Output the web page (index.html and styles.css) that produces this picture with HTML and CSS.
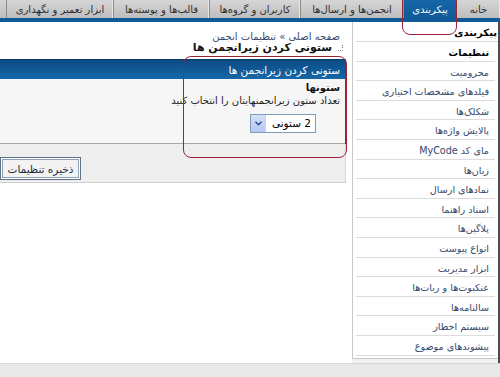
FILE: index.html
```html
<!DOCTYPE html>
<html lang="fa" dir="rtl">
<head>
  <meta charset="UTF-8">
  <title>پیکربندی - تنظیمات انجمن</title>
  <link rel="stylesheet" href="styles.css">
</head>
<body>
  <div class="menu">
    <a class="tab">خانه</a>
    <a class="tab active">پیکربندی</a>
    <a class="tab">انجمن‌ها و ارسال‌ها</a>
    <a class="tab">کاربران و گروه‌ها</a>
    <a class="tab">قالب‌ها و پوسته‌ها</a>
    <a class="tab">ابزار تعمیر و نگهداری</a>
  </div>

  <div class="page">
    <aside class="sidebar">
      <div class="side-box">
        <h3>پیکربندی</h3>
        <ul>
          <li class="current">تنظیمات</li>
          <li>محرومیت</li>
          <li>فیلدهای مشخصات اختیاری</li>
          <li>شکلک‌ها</li>
          <li>پالایش واژه‌ها</li>
          <li>مای کد MyCode</li>
          <li>زبان‌ها</li>
          <li>نمادهای ارسال</li>
          <li>اسناد راهنما</li>
          <li>پلاگین‌ها</li>
          <li>انواع پیوست</li>
          <li>ابزار مدیریت</li>
          <li>عنکبوت‌ها و ربات‌ها</li>
          <li>سالنامه‌ها</li>
          <li>سیستم اخطار</li>
          <li>پیشوندهای موضوع</li>
        </ul>
      </div>
    </aside>

    <main class="content">
      <div class="breadcrumb">صفحه اصلی » تنظیمات انجمن</div>
      <h2 class="title">
        <svg class="title-icon" width="6" height="7" viewBox="0 0 6 7">
          <rect x="4" y="0" width="1" height="1" fill="#777"/>
          <rect x="4" y="2" width="1" height="1" fill="#777"/>
          <rect x="0" y="5" width="1" height="1" fill="#999"/>
          <rect x="2" y="5" width="1" height="1" fill="#999"/>
          <rect x="4" y="5" width="1" height="1" fill="#999"/>
        </svg>
        ستونی کردن زیرانجمن ها
      </h2>

      <div class="panel">
        <div class="panel-head">ستونی کردن زیرانجمن ها</div>
        <div class="panel-body">
          <div class="label">ستونها</div>
          <div class="desc">تعداد ستون زیرانجمنهایتان را انتخاب کنید</div>
          <div class="select">
            <span class="select-value">2 ستونی</span>
            <span class="select-arrow">
              <svg width="7" height="5" viewBox="0 0 7 5"><path d="M0.5 0.8 L3.5 3.8 L6.5 0.8" fill="none" stroke="#2b4a8a" stroke-width="1.4"/></svg>
            </span>
          </div>
        </div>
      </div>

      <div class="buttons">
        <button class="save">ذخیره تنظیمات</button>
      </div>
    </main>
  </div>

  <div class="footer"></div>

  <div class="mark mark-tab"></div>
  <div class="mark mark-panel"></div>
</body>
</html>
```

FILE: styles.css
```css
body {
  margin: 0;
  width: 500px;
  height: 377px;
  overflow: hidden;
  position: relative;
  background-color: #fff;
  font-family: "DejaVu Sans", sans-serif;
  font-size: 10px;
  color: #222;
}

.menu {
  display: flex;
  height: 18px;
  background: linear-gradient(#d6d6d6, #bdbdbd);
  border-bottom: 4px solid #0f5a97;
}

.tab {
  display: block;
  line-height: 19px;
  text-align: center;
  color: #2e2e2e;
  border-left: 1px solid #8c8c8c;
  box-shadow: inset -1px 0 0 #e6e6e6;
  white-space: nowrap;
  font-size: 10px;
}

.tab:nth-child(1) { width: 43px; }
.tab:nth-child(2) { width: 52px; }
.tab:nth-child(3) { width: 102px; }
.tab:nth-child(4) { width: 90px; }
.tab:nth-child(5) { width: 95px; }
.tab:nth-child(6) { width: 106px; }

.tab.active {
  background: linear-gradient(#1767a8, #0f5a97);
  color: #fff;
  box-shadow: none;
}

.page {
  display: flex;
  height: 341px;
}

.sidebar {
  width: 146px;
  border-right: 2px solid #4d4d4d;
  background-color: #f1f1f1;
}

.side-box {
  height: 336px;
  background-color: #fff;
  border-left: 1px solid #c9c9c9;
  border-bottom: 1px solid #c9c9c9;
}

.side-box h3 {
  margin: 0 0 0 3px;
  height: 19px;
  line-height: 22px;
  padding-right: 1px;
  font-size: 10px;
  font-weight: bold;
  color: #000;
  border-bottom: 1px solid #d9d9d9;
}

.side-box ul {
  list-style: none;
  margin: 0;
  padding: 0;
}

.side-box li {
  margin: 0 3px;
  height: 18.6px;
  line-height: 21px;
  padding-right: 6px;
  border-bottom: 1px solid #dcdcdc;
  color: #34476a;
  white-space: nowrap;
  font-size: 9.6px;
}

.side-box li.current {
  color: #000;
  font-weight: bold;
}

.content {
  flex: 1;
  padding: 9px 6px 0 0;
}

.breadcrumb {
  padding-right: 6px;
  line-height: 11px;
  color: #3b4c6c;
}

.title {
  margin: 0 0 5px;
  padding-right: 2px;
  line-height: 12px;
  font-size: 11px;
  font-weight: bold;
  color: #111;
}

.title-icon {
  margin-left: 2px;
  vertical-align: middle;
}

.panel {
  border-right: 1px solid #1d4f7d;
}

.panel-head {
  height: 19px;
  line-height: 20px;
  padding-right: 5px;
  background: linear-gradient(#0b4b84, #1668a9);
  border-top: 1px solid #083a66;
  color: #fff;
  font-size: 10.5px;
}

.panel-body {
  height: 61px;
  padding: 3px 5px 0 0;
  background-color: #f6f6f6;
  border-bottom: 1px solid #a9a9a9;
}

.label {
  line-height: 11px;
  font-weight: bold;
  color: #111;
}

.desc {
  margin-top: 2px;
  line-height: 11px;
  color: #222;
}

.select {
  display: flex;
  width: 64px;
  height: 17px;
  margin: 8px 24px 0 0;
  border: 1px solid #7f9db9;
  background-color: #fff;
}

.select-value {
  flex: 1;
  line-height: 17px;
  padding-right: 4px;
  font-size: 10.5px;
  color: #000;
}

.select-arrow {
  display: flex;
  align-items: center;
  justify-content: center;
  width: 14px;
  background: linear-gradient(#d6e1f8, #b4c7ef);
  border-right: 1px solid #c3d2ee;
}

.buttons {
  display: flex;
  justify-content: flex-end;
  align-items: flex-end;
  height: 38px;
  background-color: #eeeeee;
  border-bottom: 1px solid #cfcfcf;
  border-right: 1px solid #d6d6d6;
}

.save {
  height: 23px;
  width: 81px;
  margin-bottom: 2px;
  padding: 0;
  font-family: "DejaVu Sans", sans-serif;
  font-size: 10.5px;
  color: #1e2a3a;
  background-color: #f3f3f3;
  border: 1px solid #5f738a;
  box-shadow: inset 0 0 0 1px #fff, inset 0 0 0 2px #8da0b5;
}

.footer {
  height: 14px;
  background-color: #e9e9e9;
  border-top: 1px solid #d6d6d6;
}

.mark {
  position: absolute;
  border: 1px solid #9d2338;
  border-radius: 8px;
}

.mark-tab {
  left: 402px;
  top: -10px;
  width: 53px;
  height: 43px;
}

.mark-panel {
  left: 183px;
  top: 56px;
  width: 162px;
  height: 100px;
}
```
